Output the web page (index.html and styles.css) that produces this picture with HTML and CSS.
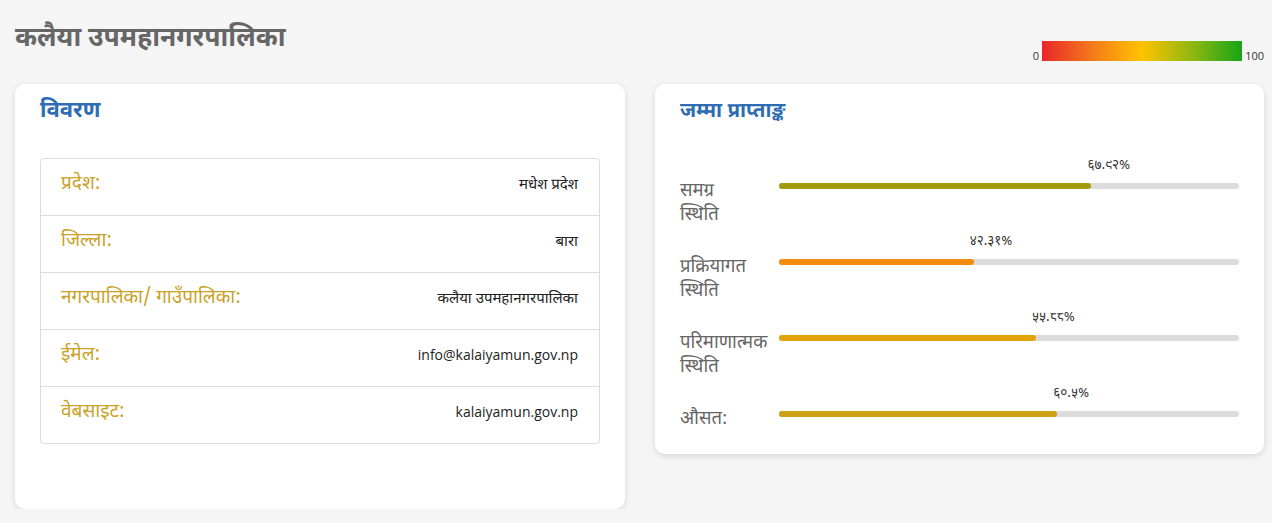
FILE: index.html
```html
<!DOCTYPE html>
<html lang="ne">
<head>
<meta charset="utf-8">
<title>कलैया उपमहानगरपालिका</title>
<link rel="stylesheet" href="styles.css">
</head>
<body>
<div class="page">
  <header class="top">
    <h1 class="title">कलैया उपमहानगरपालिका</h1>
    <div class="legend">
      <span class="legend-num">0</span>
      <span class="legend-bar"></span>
      <span class="legend-num">100</span>
    </div>
  </header>
  <main class="cards">
    <section class="card card-info">
      <h2 class="card-title">विवरण</h2>
      <ul class="info-list">
        <li class="info-row"><span class="info-label">प्रदेश:</span><span class="info-value">मधेश प्रदेश</span></li>
        <li class="info-row"><span class="info-label">जिल्ला:</span><span class="info-value">बारा</span></li>
        <li class="info-row"><span class="info-label">नगरपालिका/ गाउँपालिका:</span><span class="info-value">कलैया उपमहानगरपालिका</span></li>
        <li class="info-row"><span class="info-label">ईमेल:</span><span class="info-value latin">info@kalaiyamun.gov.np</span></li>
        <li class="info-row"><span class="info-label">वेबसाइट:</span><span class="info-value latin">kalaiyamun.gov.np</span></li>
      </ul>
    </section>
    <section class="card card-score">
      <h2 class="card-title card-title-sm">जम्मा प्राप्ताङ्क</h2>
      <div class="scores">
        <div class="score-row">
          <div class="score-label"><span class="word">समग्र</span> <span class="word">स्थिति</span></div>
          <div class="score-track"><div class="score-fill fill-olive" style="width:67.92%"><span class="score-pct">६७.९२%</span></div></div>
        </div>
        <div class="score-row">
          <div class="score-label"><span class="word">प्रक्रियागत</span> <span class="word">स्थिति</span></div>
          <div class="score-track"><div class="score-fill fill-orange" style="width:42.31%"><span class="score-pct">४२.३१%</span></div></div>
        </div>
        <div class="score-row">
          <div class="score-label"><span class="word">परिमाणात्मक</span> <span class="word">स्थिति</span></div>
          <div class="score-track"><div class="score-fill fill-amber" style="width:55.88%"><span class="score-pct">५५.८८%</span></div></div>
        </div>
        <div class="score-row">
          <div class="score-label"><span class="word">औसत:</span></div>
          <div class="score-track"><div class="score-fill fill-gold" style="width:60.5%"><span class="score-pct">६०.५%</span></div></div>
        </div>
      </div>
    </section>
  </main>
</div>
</body>
</html>
```

FILE: styles.css
```css
* { box-sizing: border-box; }
html, body { margin: 0; padding: 0; }
body {
  background: #f5f5f5;
  font-family: "Noto Sans Devanagari", "Noto Sans", "Open Sans", "DejaVu Sans", sans-serif;
  color: #333;
}
.page {
  padding: 22px 8px 0 15px;
}
.top {
  display: flex;
  justify-content: space-between;
  align-items: flex-start;
  height: 62px;
}
.title {
  margin: 0;
  font-size: 26.5px;
  font-weight: 700;
  color: #666;
  line-height: 36px;
}
.legend {
  display: flex;
  align-items: flex-end;
  gap: 3px;
  margin-top: 19px;
}
.legend-num {
  font-family: "Open Sans", "DejaVu Sans", sans-serif;
  font-size: 11px;
  line-height: 10px;
  color: #333;
}
.legend-bar {
  display: block;
  width: 200px;
  height: 20px;
  background: linear-gradient(to right, #e8262a 0%, #f47a1a 25%, #ffc300 50%, #8fb810 75%, #16a516 100%);
}
.cards {
  display: grid;
  grid-template-columns: 610px 609px;
  column-gap: 30px;
  align-items: start;
}
.card {
  background: #fff;
  border-radius: 10px;
  box-shadow: 0 2px 6px rgba(0,0,0,0.12);
  padding: 12px 25px 0 25px;
}
.card-info { padding-bottom: 65px; }
.card-score { padding-bottom: 22px; }
.card-title {
  margin: 0;
  font-size: 22px;
  font-weight: 700;
  color: #2e6db4;
  line-height: 32px;
}
.card-title-sm { font-size: 20.5px; }
.info-list {
  list-style: none;
  margin: 30px 0 0 0;
  padding: 0;
  border: 1px solid #dcdcdc;
  border-radius: 4px;
}
.info-row {
  display: flex;
  justify-content: space-between;
  align-items: baseline;
  padding: 12px 21px 16px 20px;
  border-top: 1px solid #dcdcdc;
  height: 57px;
}
.info-row:first-child { border-top: none; height: 56px; }
.info-label {
  font-size: 19px;
  color: #c9a227;
  line-height: 28px;
}
.info-value {
  font-size: 15px;
  color: #222;
}
.latin {
  font-family: "Open Sans", "Noto Sans", sans-serif;
  font-size: 14px;
}
.scores {
  display: flex;
  flex-direction: column;
  gap: 28px;
  margin-top: 52px;
}
.score-row {
  display: flex;
  align-items: flex-start;
}
.score-label {
  width: 99px;
  flex: none;
  font-size: 18.5px;
  line-height: 24px;
  color: #666;
  padding-right: 6px;
}
.word { display: block; }
.score-track {
  flex: 1;
  height: 6px;
  margin-top: 3px;
  background: #dcdcdc;
  border-radius: 3px;
}
.score-fill {
  position: relative;
  height: 100%;
  border-radius: 3px;
}
.score-pct {
  position: absolute;
  left: 100%;
  bottom: 15px;
  transform: translateX(-4px);
  font-size: 13.5px;
  line-height: 15px;
  color: #333;
  white-space: nowrap;
}
.fill-olive { background: #a39a0a; }
.fill-orange { background: #f68a0c; }
.fill-amber { background: #e1a308; }
.fill-gold { background: #cea013; }
```
